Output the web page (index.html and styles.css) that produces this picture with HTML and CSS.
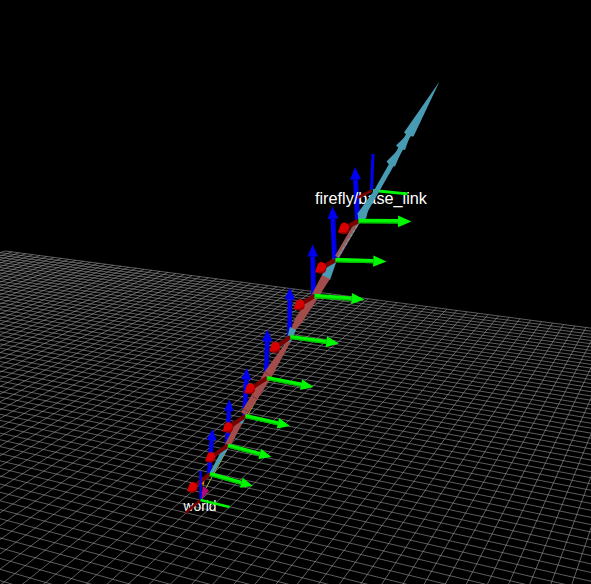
FILE: index.html
```html
<!DOCTYPE html>
<html lang="en">
<head>
<meta charset="utf-8">
<title>3D view</title>
<link rel="stylesheet" href="styles.css">
</head>
<body>
<svg class="scene" viewBox="0 0 591 584" width="591" height="584">
  <g id="grid" class="grid"></g>
  <g id="back"></g>
  <text class="label" x="315" y="203.5" textLength="112" lengthAdjust="spacingAndGlyphs">firefly/base_link</text>
  <text class="label label-small" x="183.5" y="511" textLength="33" lengthAdjust="spacingAndGlyphs">world</text>
  <g id="tip"></g>
  <g class="trajectory">
    <path class="yellow" d="M269 378L246 418M255 398L229 446L206 488"/>
    <path class="cyan" d="M439.5 81.5L404 132.5L408 136L413.5 136.500ZM412 130L396 145.500L400 149L405 150ZM405 143L386.500 161.500L390 165.500L395 166.500Z"/>
    <path class="cyan-line" d="M409 134L360 220"/>
    <path class="cyan" d="M373 192L357.500 213.500L359 221L366 218.500Z"/>
    <path class="mix-line" d="M358 221L337 257"/>
    <path class="mix-dash" d="M360 221L338 257"/>
    <path class="cyan" d="M333 258L337 260L330 280L321.500 275.500Z"/>
    <path class="rose" d="M322 275L330 279L319 296L312 294ZM311 295L318 298L303 321L295 331L291 329L296 317Z"/>
    <path class="cyan" d="M290 327L296 330L290 343.500L286 342Z"/>
    <path class="rose" d="M287 341L290.500 342L271 378L257 400L250 410L246 416L241 412L251 396L265 371Z"/>
    <path class="seam" d="M265 372L271 376M252 396L257 399M243 409L249 412M312 294L319 296"/>
    <path class="cyan" d="M239 418L245 419L242 424.500L237 422.500Z"/>
    <path class="rose" d="M237 421L242 424L231 445L227 446L225 444Z"/>
    <path class="cyan" d="M224 446L229 447L214 472L209 474Z"/>
    <path class="orange" d="M201.500 484L204.500 480L204 485Z"/>
    <path class="magenta" d="M203 486L209 490.500L200.500 500.500Z"/>
  </g>
  <g id="axes"></g>
</svg>
<script src="scene.js"></script>
</body>
</html>
```
FILE: styles.css
```css
html, body { margin: 0; background: #000; overflow: hidden; }
.scene { display: block; background: #000; }
.grid line { stroke: #a0a0a4; stroke-opacity: .58; stroke-width: 1; }
.label { font-family: "Liberation Sans", Arial, sans-serif; font-size: 16.8px; fill: #fff; }
.label-small { font-size: 15.2px; }
.blue { fill: #0000f5; stroke: #0000f5; }
.green { fill: #00f800; stroke: #00f800; }
.red { fill: #780000; stroke: #780000; }
.cone { stroke: none; }
.red-head { fill: #d80000; }
.red-shade { fill: #960000; }
.green-shade { stroke: #00c000; }
.blue-shade { stroke: #0000d0; }
.cyan { fill: #479cb3; }
.cyan-line { stroke: #479cb3; stroke-width: 5; }
.rose { fill: #a34c4c; }
.mix-line { stroke: #9a5555; stroke-width: 4.5; }
.mix-dash { stroke: #6c95a3; stroke-width: 1.5; stroke-dasharray: 4 1; }
.seam { stroke: #783636; stroke-width: 1; }
.yellow { stroke: #b4b43c; stroke-width: 1; fill: none; }
.orange { fill: #ff7800; }
.magenta { fill: #b40a78; }
```
FILE: scene.js
```js
const NS = 'http://www.w3.org/2000/svg';

function add(parent, tag, attrs) {
  const el = document.createElementNS(NS, tag);
  for (const k in attrs) el.setAttribute(k, attrs[k]);
  parent.appendChild(el);
  return el;
}

// Ground plane cell (i, j) to screen position.
function project(i, j) {
  const h = 17.9;
  const a = 28.49, b = 31.63 - i, p = i * h + 21527;
  const d = 15.27, e = -65.98 - j, q = j * h - 29928;
  const det = a * e - b * d;
  return [(p * e - b * q) / det, (a * q - p * d) / det];
}

const grid = document.getElementById('grid');
function gridLine(s, t) {
  add(grid, 'line', { x1: s[0], y1: s[1], x2: t[0], y2: t[1] });
}
for (let n = -50; n <= 50; n++) {
  gridLine(project(n, -50), project(n, 50));
  gridLine(project(-50, n), project(50, n));
}

function bar(parent, cls, x1, y1, x2, y2, w) {
  add(parent, 'line', { class: cls, x1, y1, x2, y2, 'stroke-width': w });
}
function arrow(parent, cls, x1, y1, x2, y2, w, len, half) {
  const l = Math.hypot(x2 - x1, y2 - y1);
  const ux = (x2 - x1) / l, uy = (y2 - y1) / l;
  const bx = x2 - ux * len, by = y2 - uy * len;
  const ox = -uy * w * .35, oy = ux * w * .35;
  bar(parent, cls, x1, y1, bx, by, w);
  bar(parent, cls + '-shade', x1 + ox, y1 + oy, bx + ox, by + oy, w * .3);
  add(parent, 'polygon', {
    class: cls + ' cone',
    points: `${x2},${y2} ${bx - uy * half},${by + ux * half} ${bx + uy * half},${by - ux * half}`
  });
}

const back = document.getElementById('back');
const tip = document.getElementById('tip');
const axes = document.getElementById('axes');

// Origin, blue tip, green tip, red head centre, size.
const frames = [
  [358.5, 221, 355, 167, 411.5, 221.500, 344, 228.500, 1],
  [335.5, 260, 332.500, 206.500, 386.500, 261.500, 321, 268, .98],
  [314.5, 296, 312.500, 244.500, 364.500, 299.500, 299.500, 305, .96],
  [290.5, 337, 290, 287.500, 339, 343.500, 275, 347.500, .95],
  [267, 378, 267.500, 329.500, 313.500, 387, 250, 389, .94],
  [245.5, 416, 246.700, 368, 290, 426, 228, 427.500, .92],
  [228, 445.500, 229.500, 399.500, 271.500, 457, 210.500, 457.500, .9],
  [210, 474, 212.500, 429, 253, 486, 192.500, 487.500, .9]
];
for (const [x, y, bx, by, gx, gy, rx, ry, s] of frames) {
  arrow(back, 'blue', x - 1, y, bx, by, 4.800 * s, 12.500 * s, 5.500 * s);
  bar(axes, 'red', x, y, rx, ry, 4.400 * s);
  arrow(axes, 'green', x, y, gx, gy, 4.500 * s, 13.500 * s, 5.800 * s);
  add(axes, 'path', {
    class: 'red-head',
    transform: `translate(${rx} ${ry}) scale(${s})`,
    d: 'M-6 4L-4 -2Q-3 -6 0.500 -6Q4 -5.500 5 -2Q6 2 3.500 4.500Q1 6 -1 5.500Z'
  });
  add(axes, 'path', {
    class: 'red-shade',
    transform: `translate(${rx} ${ry}) scale(${s})`,
    d: 'M-6 4L2 3.500L5.300 0Q5.500 3 3.500 4.500Q1 6 -1 5.500Z'
  });
}
bar(back, 'blue', 371.5, 190, 373, 154, 3);
bar(tip, 'red', 372, 190.500, 358, 197.500, 2.800);
bar(tip, 'green', 373, 190.500, 407.500, 193.800, 2.800);
bar(axes, 'blue', 200.500, 500, 200.500, 471, 2.400);
bar(axes, 'red', 200.500, 500, 185.500, 513, 2.400);
bar(axes, 'green', 200.500, 500, 229.500, 507, 2.400);
```
